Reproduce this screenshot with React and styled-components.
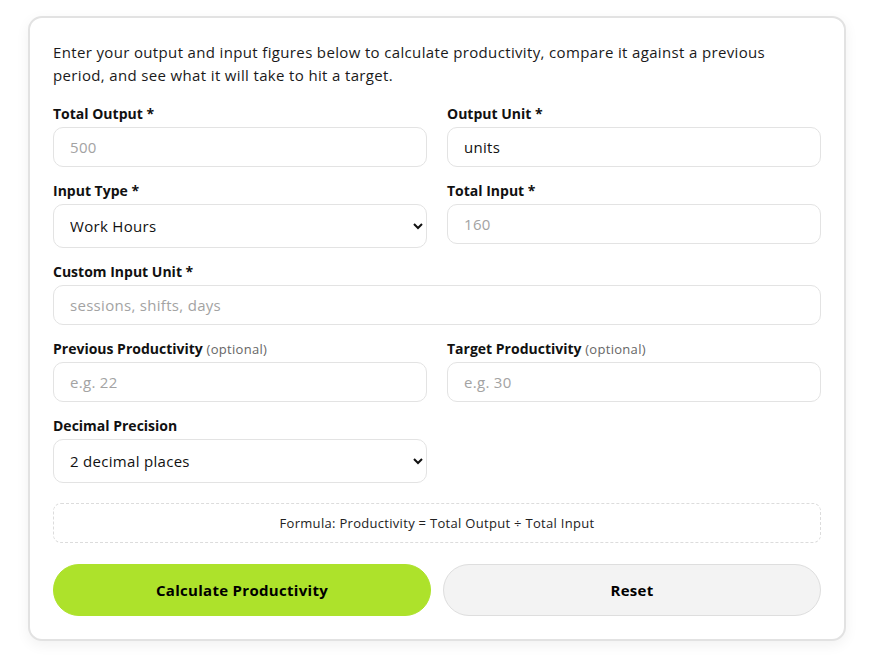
import React from "react";
import styled, { createGlobalStyle } from "styled-components";

const GlobalStyle = createGlobalStyle`
  body {
    margin: 0;
    background: #ffffff;
    font-family: "Open Sans", "Liberation Sans", sans-serif;
    color: #111;
  }
`;

const fields = [
  { label: "Total Output *", placeholder: "500" },
  { label: "Output Unit *", value: "units" },
  { label: "Input Type *", select: ["Work Hours", "Employees", "Machine Hours", "Custom"] },
  { label: "Total Input *", placeholder: "160" },
  { label: "Custom Input Unit *", placeholder: "sessions, shifts, days", wide: true },
  { label: "Previous Productivity", optional: true, placeholder: "e.g. 22" },
  { label: "Target Productivity", optional: true, placeholder: "e.g. 30" },
  { label: "Decimal Precision", select: ["2 decimal places", "0 decimal places", "1 decimal place", "3 decimal places"] },
];

export default function App() {
  return (
    <Page>
      <GlobalStyle />
      <Card>
        <Intro>
          Enter your output and input figures below to calculate productivity,
          compare it against a previous period, and see what it will take to hit a
          target.
        </Intro>
        <FormGrid>
          {fields.map((f) => (
            <Field key={f.label} $wide={f.wide}>
              <Label>
                {f.label}
                {f.optional && <Optional> (optional)</Optional>}
              </Label>
              {f.select ? (
                <Select defaultValue={f.select[0]}>
                  {f.select.map((o) => (
                    <option key={o}>{o}</option>
                  ))}
                </Select>
              ) : (
                <Input
                  type="text"
                  placeholder={f.placeholder}
                  defaultValue={f.value}
                />
              )}
            </Field>
          ))}
        </FormGrid>
        <Formula>Formula: Productivity = Total Output ÷ Total Input</Formula>
        <Actions>
          <Button $primary>Calculate Productivity</Button>
          <Button>Reset</Button>
        </Actions>
      </Card>
    </Page>
  );
}

const Page = styled.div`
  padding: 16px 24px 20px 28px;
`;

const Card = styled.div`
  box-sizing: border-box;
  width: 818px;
  background: #fff;
  border: 2px solid #e2e2e2;
  border-radius: 14px;
  box-shadow: 0 4px 14px rgba(0, 0, 0, 0.06);
  padding: 23px 23px 23px 23px;
`;

const Intro = styled.p`
  margin: 0 0 18px;
  font-size: 15px;
  line-height: 23px;
  letter-spacing: 0.35px;
  color: #1a1a1a;
`;

const FormGrid = styled.div`
  display: grid;
  grid-template-columns: 1fr 1fr;
  column-gap: 20px;
  row-gap: 15px;
`;

const Field = styled.div`
  display: flex;
  flex-direction: column;
  gap: 4px;
  grid-column: ${(p) => (p.$wide ? "1 / -1" : "auto")};
`;

const Label = styled.label`
  font-size: 14px;
  line-height: 18px;
  font-weight: 700;
  color: #111;
`;

const Optional = styled.span`
  font-weight: 400;
  font-size: 13px;
  letter-spacing: 0.3px;
  color: #666;
`;

const Input = styled.input`
  box-sizing: border-box;
  height: 40px;
  width: 100%;
  border: 1px solid #e3e3e3;
  border-radius: 10px;
  padding: 0 16px;
  font-family: inherit;
  font-size: 15px;
  letter-spacing: 0.3px;
  color: #111;
  background: #fff;
  outline: none;
  &::placeholder {
    color: #a3a3a3;
  }
`;

const Select = styled.select`
  box-sizing: border-box;
  height: 44px;
  width: 100%;
  border: 1px solid #e3e3e3;
  border-radius: 10px;
  padding: 0 12px;
  font-family: inherit;
  font-size: 15px;
  letter-spacing: 0.3px;
  color: #111;
  background: #fff;
  outline: none;
`;

const Formula = styled.div`
  box-sizing: border-box;
  margin-top: 20px;
  height: 40px;
  display: flex;
  align-items: center;
  justify-content: center;
  border: 1px dashed #dcdcdc;
  border-radius: 8px;
  font-size: 13px;
  letter-spacing: 0.3px;
  color: #222;
`;

const Actions = styled.div`
  margin-top: 21px;
  display: grid;
  grid-template-columns: 1fr 1fr;
  gap: 12px;
`;

const Button = styled.button`
  height: 52px;
  border-radius: 26px;
  font-family: inherit;
  font-size: 15px;
  font-weight: 700;
  letter-spacing: 0.3px;
  color: #000;
  cursor: pointer;
  border: 1px solid ${(p) => (p.$primary ? "#ade22b" : "#dedede")};
  background: ${(p) => (p.$primary ? "#ade22b" : "#f3f3f3")};
`;
